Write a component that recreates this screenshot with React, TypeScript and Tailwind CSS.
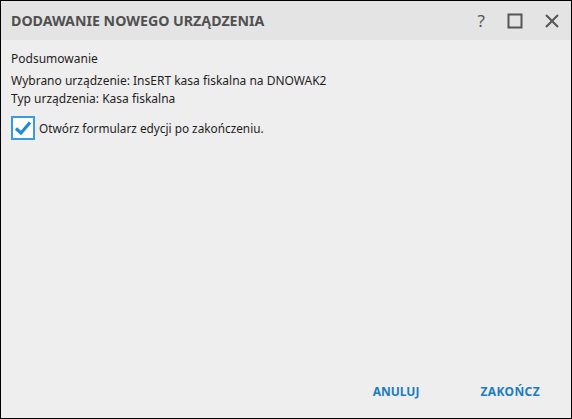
import React, { useState } from 'react'

export default function App() {
  const [openForm, setOpenForm] = useState(true)

  return (
    <div
      className="w-[572px] h-[419px] border border-black bg-[#eeeeee] flex flex-col text-[#1e1e1e]"
      style={{ fontFamily: '"Noto Sans", "Open Sans", sans-serif' }}
    >
      {/* Title bar */}
      <div className="h-[39px] bg-[#e4e4e4] flex items-center pl-[10px] pr-[12px] shrink-0">
        <div className="flex-1 text-[14.2px] font-bold text-[#505050]">
          DODAWANIE NOWEGO URZĄDZENIA
        </div>
        <div className="flex items-center gap-[22px] text-[#555555]">
          <span className="text-[17px] leading-none">?</span>
          <svg width="16" height="16" viewBox="0 0 16 16">
            <rect x="1.5" y="1.5" width="13" height="13" fill="none" stroke="currentColor" strokeWidth="2" />
          </svg>
          <svg width="14" height="14" viewBox="0 0 14 14">
            <path d="M1 1 L13 13 M13 1 L1 13" stroke="currentColor" strokeWidth="2" />
          </svg>
        </div>
      </div>

      {/* Body */}
      <div className="flex-1 flex flex-col px-[10px] pt-[10px] text-[12px] leading-[18px]">
        <div>Podsumowanie</div>
        <div className="mt-[4px]">Wybrano urządzenie: InsERT kasa fiskalna na DNOWAK2</div>
        <div>Typ urządzenia: Kasa fiskalna</div>

        <label className="mt-[8px] flex items-center gap-[4px] cursor-pointer">
          <span
            onClick={() => setOpenForm(!openForm)}
            className="w-[24px] h-[24px] border-2 border-[#3a9ae0] bg-white flex items-center justify-center"
          >
            {openForm && (
              <svg width="18" height="16" viewBox="0 0 18 16">
                <path d="M2 8.5 L7 13 L16 2.5" fill="none" stroke="#1f8ad6" strokeWidth="3.2" />
              </svg>
            )}
          </span>
          <span className="text-[11.8px]">Otwórz formularz edycji po zakończeniu.</span>
        </label>
      </div>

      {/* Footer */}
      <div className="h-[52px] flex items-center justify-end gap-[61px] pr-[31px] shrink-0 text-[12px] font-bold text-[#1b7dc0]">
        <button>ANULUJ</button>
        <button className="tracking-[0.4px]">ZAKOŃCZ</button>
      </div>
    </div>
  )
}
